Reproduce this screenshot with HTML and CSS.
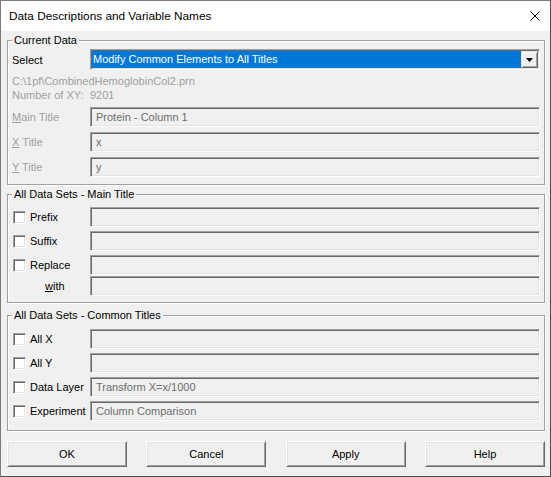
FILE: index.html
```html
<!DOCTYPE html>
<html>
<head>
<meta charset="utf-8">
<link rel="stylesheet" href="styles.css">
</head>
<body>
<div class="window">
  <div class="titlebar">
    <span class="title">Data Descriptions and Variable Names</span>
    <svg class="close" width="10" height="10" viewBox="0 0 10 10"><path d="M0.5 0.5 L9.5 9.5 M9.5 0.5 L0.5 9.5" stroke="#000" stroke-width="1" fill="none"/></svg>
  </div>
  <div class="content">
    <div class="group g1">
      <span class="group-label">Current Data</span>
      <div class="row row-select">
        <span class="lbl lbl-active"><span>Select</span></span>
        <div class="combo">
          <span class="combo-sel">Modify Common Elements to All Titles</span>
          <span class="combo-btn"><svg width="7" height="4" viewBox="0 0 7 4"><polygon points="0,0 7,0 3.5,4" fill="#000"/></svg></span>
        </div>
      </div>
      <div class="info info-first">C:\1pf\CombinedHemoglobinCol2.prn</div>
      <div class="info"><span class="info-key">Number of XY:</span>9201</div>
      <div class="row row-g1">
        <span class="lbl"><span><u>M</u>ain Title</span></span>
        <div class="field">Protein - Column 1</div>
      </div>
      <div class="row row-g1">
        <span class="lbl"><span><u>X</u> Title</span></span>
        <div class="field">x</div>
      </div>
      <div class="row row-g1">
        <span class="lbl"><span><u>Y</u> Title</span></span>
        <div class="field">y</div>
      </div>
    </div>

    <div class="group g2">
      <span class="group-label">All Data Sets - Main Title</span>
      <div class="row row-first2">
        <span class="lbl lbl-active"><span class="cb"></span><span>Prefix</span></span>
        <div class="field"></div>
      </div>
      <div class="row">
        <span class="lbl lbl-active"><span class="cb"></span><span>Suffix</span></span>
        <div class="field"></div>
      </div>
      <div class="row">
        <span class="lbl lbl-active"><span class="cb"></span><span>Replace</span></span>
        <div class="field"></div>
      </div>
      <div class="row row-with">
        <span class="lbl lbl-active lbl-with"><span><u>w</u>ith</span></span>
        <div class="field"></div>
      </div>
    </div>

    <div class="group g3">
      <span class="group-label">All Data Sets - Common Titles</span>
      <div class="row row-first3">
        <span class="lbl lbl-active"><span class="cb"></span><span>All X</span></span>
        <div class="field"></div>
      </div>
      <div class="row">
        <span class="lbl lbl-active"><span class="cb"></span><span>All Y</span></span>
        <div class="field"></div>
      </div>
      <div class="row">
        <span class="lbl lbl-active"><span class="cb"></span><span>Data Layer</span></span>
        <div class="field">Transform X=x/1000</div>
      </div>
      <div class="row">
        <span class="lbl lbl-active"><span class="cb"></span><span>Experiment</span></span>
        <div class="field">Column Comparison</div>
      </div>
    </div>

    <div class="buttons">
      <button class="btn">OK</button>
      <button class="btn">Cancel</button>
      <button class="btn">Apply</button>
      <button class="btn">Help</button>
    </div>
  </div>
</div>
</body>
</html>
```

FILE: styles.css
```css
html, body {
  margin: 0;
  padding: 0;
}
body {
  width: 551px;
  height: 477px;
  font-family: "Liberation Sans", Arial, sans-serif;
  font-size: 11px;
  color: #000;
  overflow: hidden;
}
.window {
  box-sizing: border-box;
  width: 551px;
  height: 477px;
  border: 1px solid #7a7a7a;
  border-right-color: #4d4d4d;
  border-bottom-color: #4d4d4d;
  background: #f0f0f0;
  display: flex;
  flex-direction: column;
}
.titlebar {
  height: 30px;
  flex: none;
  background: #fff;
  display: flex;
  align-items: center;
  justify-content: space-between;
  padding-left: 8px;
}
.title {
  font-size: 11.8px;
  color: #000;
}
.close {
  margin-right: 10px;
  display: block;
}
.content {
  padding: 9px 5px 0 6px;
}
.group {
  position: relative;
  border: 1px solid #a0a0a0;
  box-shadow: inset 1px 1px 0 #fff, 1px 1px 0 #fff;
  padding: 0 4px 7px 4px;
}
.g2 {
  margin-top: 9px;
  padding-bottom: 6px;
}
.g3 {
  margin-top: 12px;
  padding-bottom: 9px;
}
.group-label {
  position: absolute;
  top: -8px;
  left: 4px;
  padding: 0 2px;
  line-height: 14px;
  background: #f0f0f0;
}
.row {
  display: flex;
  align-items: center;
  height: 20px;
  margin-top: 4px;
}
.row-select {
  height: 21px;
  margin-top: 8px;
}
.row-g1 {
  margin-top: 5px;
}
.row-first2 {
  margin-top: 12px;
}
.row-first3 {
  margin-top: 13px;
}
.row-with {
  margin-top: 1px;
}
.lbl {
  width: 78px;
  flex: none;
  display: flex;
  align-items: center;
  color: #a0a0a0;
  white-space: nowrap;
}
.lbl-active {
  color: #000;
}
.lbl-with {
  padding-left: 33px;
  box-sizing: border-box;
}
.cb {
  box-sizing: border-box;
  width: 13px;
  height: 13px;
  margin-left: 1px;
  margin-right: 4px;
  background: #fff;
  border: 1px solid;
  border-color: #a0a0a0 #fff #fff #a0a0a0;
  box-shadow: inset 1px 1px 0 #696969, inset -1px -1px 0 #e3e3e3;
  flex: none;
}
.combo {
  flex: 1;
  box-sizing: border-box;
  height: 21px;
  border: 1px solid;
  border-color: #a0a0a0 #fff #fff #a0a0a0;
  box-shadow: inset 1px 1px 0 #696969, inset -1px -1px 0 #e3e3e3;
  padding: 1px;
  display: flex;
  background: #fff;
}
.combo-sel {
  flex: 1;
  background: #0078d7;
  color: #fff;
  padding-left: 1px;
  line-height: 17px;
  white-space: nowrap;
}
.combo-btn {
  width: 17px;
  flex: none;
  box-sizing: border-box;
  background: #f0f0f0;
  border: 1px solid;
  border-color: #e3e3e3 #696969 #696969 #e3e3e3;
  box-shadow: inset 1px 1px 0 #fff, inset -1px -1px 0 #a0a0a0;
  display: flex;
  align-items: center;
  justify-content: center;
}
.combo-btn svg {
  display: block;
}
.info {
  line-height: 14px;
  color: #a0a0a0;
  white-space: nowrap;
}
.info-first {
  margin-top: 4px;
}
.info-key {
  display: inline-block;
  width: 78px;
}
.field {
  flex: 1;
  box-sizing: border-box;
  height: 20px;
  border: 1px solid;
  border-color: #a0a0a0 #fff #fff #a0a0a0;
  box-shadow: inset 1px 1px 0 #696969, inset -1px -1px 0 #e3e3e3;
  padding-left: 5px;
  color: #6d6d6d;
  line-height: 18px;
  white-space: nowrap;
  overflow: hidden;
}
.buttons {
  display: flex;
  justify-content: space-between;
  margin-top: 10px;
}
.btn {
  box-sizing: border-box;
  width: 120px;
  height: 26px;
  margin: 0;
  padding: 0;
  font-family: "Liberation Sans", Arial, sans-serif;
  font-size: 11px;
  color: #000;
  background: #f0f0f0;
  border: 1px solid;
  border-color: #fff #696969 #696969 #fff;
  box-shadow: inset 1px 1px 0 #e3e3e3, inset -1px -1px 0 #a0a0a0;
}
```
